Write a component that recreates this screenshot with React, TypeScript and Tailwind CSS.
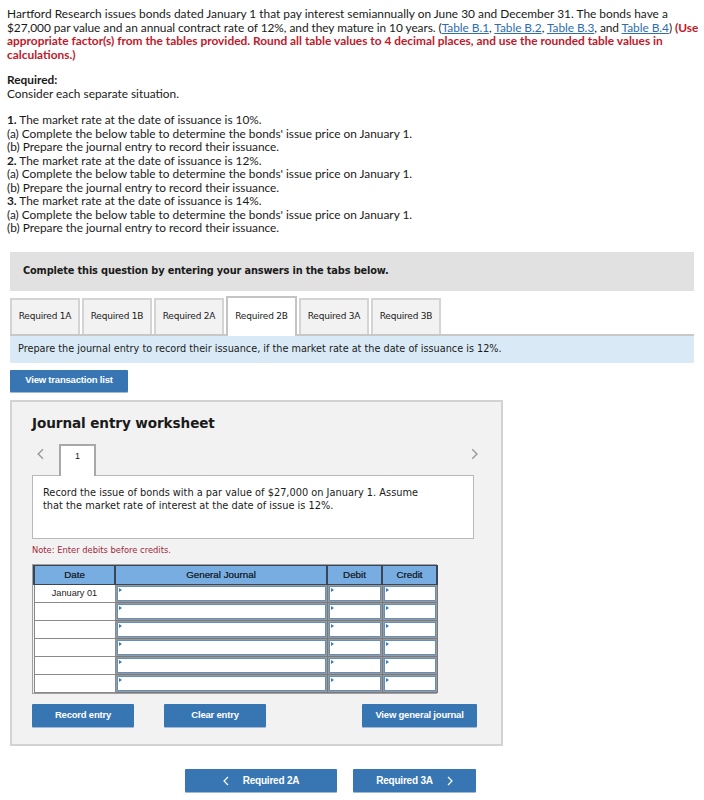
import React from "react";

const Tri = () => (
  <span className="absolute left-[1px] top-[1px] w-0 h-0 border-t-[2px] border-b-[2px] border-l-[3px] border-t-transparent border-b-transparent border-l-[#3a78c0]" />
);

function InputCell() {
  return (
    <td className="p-0 border border-[#7a7a7a] bg-[#9a9a9a]">
      <div className="relative h-[15px] bg-white border border-[#5f8fc3] m-[1px]">
        <Tri />
      </div>
    </td>
  );
}

const ChevL = ({ c = "#9a9a9a", s = 12 }: { c?: string; s?: number }) => (
  <svg width={s * 0.6} height={s} viewBox="0 0 6 10" fill="none">
    <path d="M5 1 L1 5 L5 9" stroke={c} strokeWidth="1.2" />
  </svg>
);
const ChevR = ({ c = "#9a9a9a", s = 12 }: { c?: string; s?: number }) => (
  <svg width={s * 0.6} height={s} viewBox="0 0 6 10" fill="none">
    <path d="M1 1 L5 5 L1 9" stroke={c} strokeWidth="1.2" />
  </svg>
);

export default function App() {
  const tabs = ["Required 1A", "Required 1B", "Required 2A", "Required 2B", "Required 3A", "Required 3B"];
  const btn =
    "bg-[#3776b3] text-white font-bold font-['Liberation_Sans',Arial,sans-serif] text-[9.5px] tracking-[-0.2px] flex items-center justify-center rounded-[1px] shadow-[0_1px_0_#9db9d6]";
  const link = "text-[#2f6db0] underline";
  return (
    <div className="w-[704px] min-h-[800px] bg-white text-[#1a1a1a]">
      <div className="px-[7px] pt-[7px] font-['Lato',sans-serif] leading-[13.5px]">
        <div className="text-[11.9px] whitespace-nowrap">
          <div>
            Hartford Research issues bonds dated January 1 that pay interest semiannually on June 30 and December 31. The bonds have a
          </div>
          <div className="tracking-[-0.05px]">
            $27,000 par value and an annual contract rate of 12%, and they mature in 10 years. (<span className={link}>Table B.1</span>,{" "}
            <span className={link}>Table B.2</span>, <span className={link}>Table B.3</span>, and <span className={link}>Table B.4</span>){" "}
            <span className="text-[#c0192b] font-bold">(Use</span>
          </div>
          <div className="text-[#c0192b] font-bold">
            appropriate factor(s) from the tables provided. Round all table values to 4 decimal places, and use the rounded table values in
          </div>
          <div className="text-[#c0192b] font-bold">calculations.)</div>
        </div>
        <div className="text-[11.85px]">
          <p className="mt-[12px] font-bold">Required:</p>
          <p>Consider each separate situation.</p>
          <div className="mt-[13px]">
            <p><b>1.</b> The market rate at the date of issuance is 10%.</p>
            <p>(a) Complete the below table to determine the bonds' issue price on January 1.</p>
            <p>(b) Prepare the journal entry to record their issuance.</p>
            <p><b>2.</b> The market rate at the date of issuance is 12%.</p>
            <p>(a) Complete the below table to determine the bonds' issue price on January 1.</p>
            <p>(b) Prepare the journal entry to record their issuance.</p>
            <p><b>3.</b> The market rate at the date of issuance is 14%.</p>
            <p>(a) Complete the below table to determine the bonds' issue price on January 1.</p>
            <p>(b) Prepare the journal entry to record their issuance.</p>
          </div>
        </div>
      </div>

      <div className="px-[10px] font-['DejaVu_Sans',Verdana,sans-serif]">
        <div className="mt-[17px] h-[39px] bg-[#e1e1e1] flex items-center pl-[13px] text-[9.8px] font-bold tracking-[-0.15px]">
          Complete this question by entering your answers in the tabs below.
        </div>

        <div className="mt-[7px] flex gap-[2px] border-b-[2px] border-[#c8c8c8] h-[38px] items-end">
          {tabs.map((t, i) => (
            <div
              key={t}
              className={
                i === 3
                  ? "w-[71px] -mb-[2px] h-[40px] bg-white border-[2px] border-b-0 border-[#c4c4c4] flex items-center justify-center text-[9px] tracking-[-0.2px]"
                  : "h-[36px] w-[70px] bg-[#f2f2f2] border-[2px] border-b-0 border-[#d4d4d4] flex items-center justify-center text-[9px] tracking-[-0.2px]"
              }
            >
              {t}
            </div>
          ))}
        </div>
        <div className="h-[27px] bg-[#d9eaf6] flex items-center pl-[8px] text-[9.7px]">
          Prepare the journal entry to record their issuance, if the market rate at the date of issuance is 12%.
        </div>

        <div className={`${btn} mt-[7px] w-[118px] h-[22px]`}>View transaction list</div>

        <div className="mt-[8px] w-[493px] bg-[#f2f2f2] border-[2px] border-[#d3d3d3] pl-[20px] pr-[27px] pt-[12px] pb-[17px]">
          <div className="text-[13.6px] font-bold tracking-[-0.1px] leading-[18px]">Journal entry worksheet</div>
          <div className="mt-[12px] flex items-end h-[31px] relative">
            <span className="absolute left-[5px] top-[4px]">
              <ChevL />
            </span>
            <div className="ml-[27px] w-[37px] h-[32px] bg-white border-[2px] border-b-0 border-[#a8a8a8] flex justify-center pt-[4px] text-[9px] font-['Liberation_Sans',sans-serif] -mb-[1px] relative z-10">
              1
            </div>
            <span className="absolute right-[-4px] top-[4px]">
              <ChevR />
            </span>
          </div>
          <div className="w-[442px] h-[64px] bg-white border-[1px] border-[#b8b8b8] px-[10px] pt-[10px] text-[9.8px] leading-[13px]">
            Record the issue of bonds with a par value of $27,000 on January 1. Assume
            <br />
            that the market rate of interest at the date of issue is 12%.
          </div>
          <div className="mt-[5px] text-[8.35px] text-[#a3283a]">Note: Enter debits before credits.</div>

          <div className="mt-[8px] w-[405px] border-[1px] border-[#a0a0a0] font-['Liberation_Sans',Arial,sans-serif]">
            <table className="w-full border-collapse table-fixed">
              <colgroup>
                <col className="w-[81px]" />
                <col className="w-[212px]" />
                <col className="w-[55px]" />
                <col className="w-[55px]" />
              </colgroup>
              <thead>
                <tr className="h-[19px] bg-[#78ade1] text-[9.8px] text-[#1e2a36]">
                  <th className="font-normal border-[1px] border-l-[2px] border-[#3a4654] text-center [text-shadow:0_0_0.3px_#1e2a36]">Date</th>
                  <th className="font-normal border-[1px] border-l-[2px] border-[#3a4654] text-center [text-shadow:0_0_0.3px_#1e2a36]">General Journal</th>
                  <th className="font-normal border-[1px] border-l-[2px] border-[#3a4654] text-center [text-shadow:0_0_0.3px_#1e2a36]">Debit</th>
                  <th className="font-normal border-[1px] border-x-[2px] border-[#3a4654] text-center [text-shadow:0_0_0.3px_#1e2a36]">Credit</th>
                </tr>
              </thead>
              <tbody>
                {[0, 1, 2, 3, 4, 5].map((r) => (
                  <tr key={r} className="h-[18px]">
                    <td className="p-0 border border-[#8a8a8a] bg-white text-center text-[9.2px] text-[#222]">
                      {r === 0 ? "January 01" : ""}
                    </td>
                    <InputCell />
                    <InputCell />
                    <InputCell />
                  </tr>
                ))}
              </tbody>
            </table>
          </div>

          <div className="mt-[10px] flex items-center">
            <div className={`${btn} w-[102px] h-[23px]`}>Record entry</div>
            <div className={`${btn} ml-[30px] w-[102px] h-[23px]`}>Clear entry</div>
            <div className={`${btn} ml-auto -mr-[3px] w-[115px] h-[23px]`}>View general journal</div>
          </div>
        </div>

        <div className="mt-[23px] flex gap-[16px] pl-[175px]">
          <div className={`${btn} w-[152px] h-[23px] text-[10px] gap-[14px]`}>
            <ChevL c="#ffffff" s={10} />
            <span>Required 2A</span>
          </div>
          <div className={`${btn} w-[123px] h-[23px] text-[10px] gap-[14px]`}>
            <span>Required 3A</span>
            <ChevR c="#ffffff" s={10} />
          </div>
        </div>
      </div>
    </div>
  );
}
